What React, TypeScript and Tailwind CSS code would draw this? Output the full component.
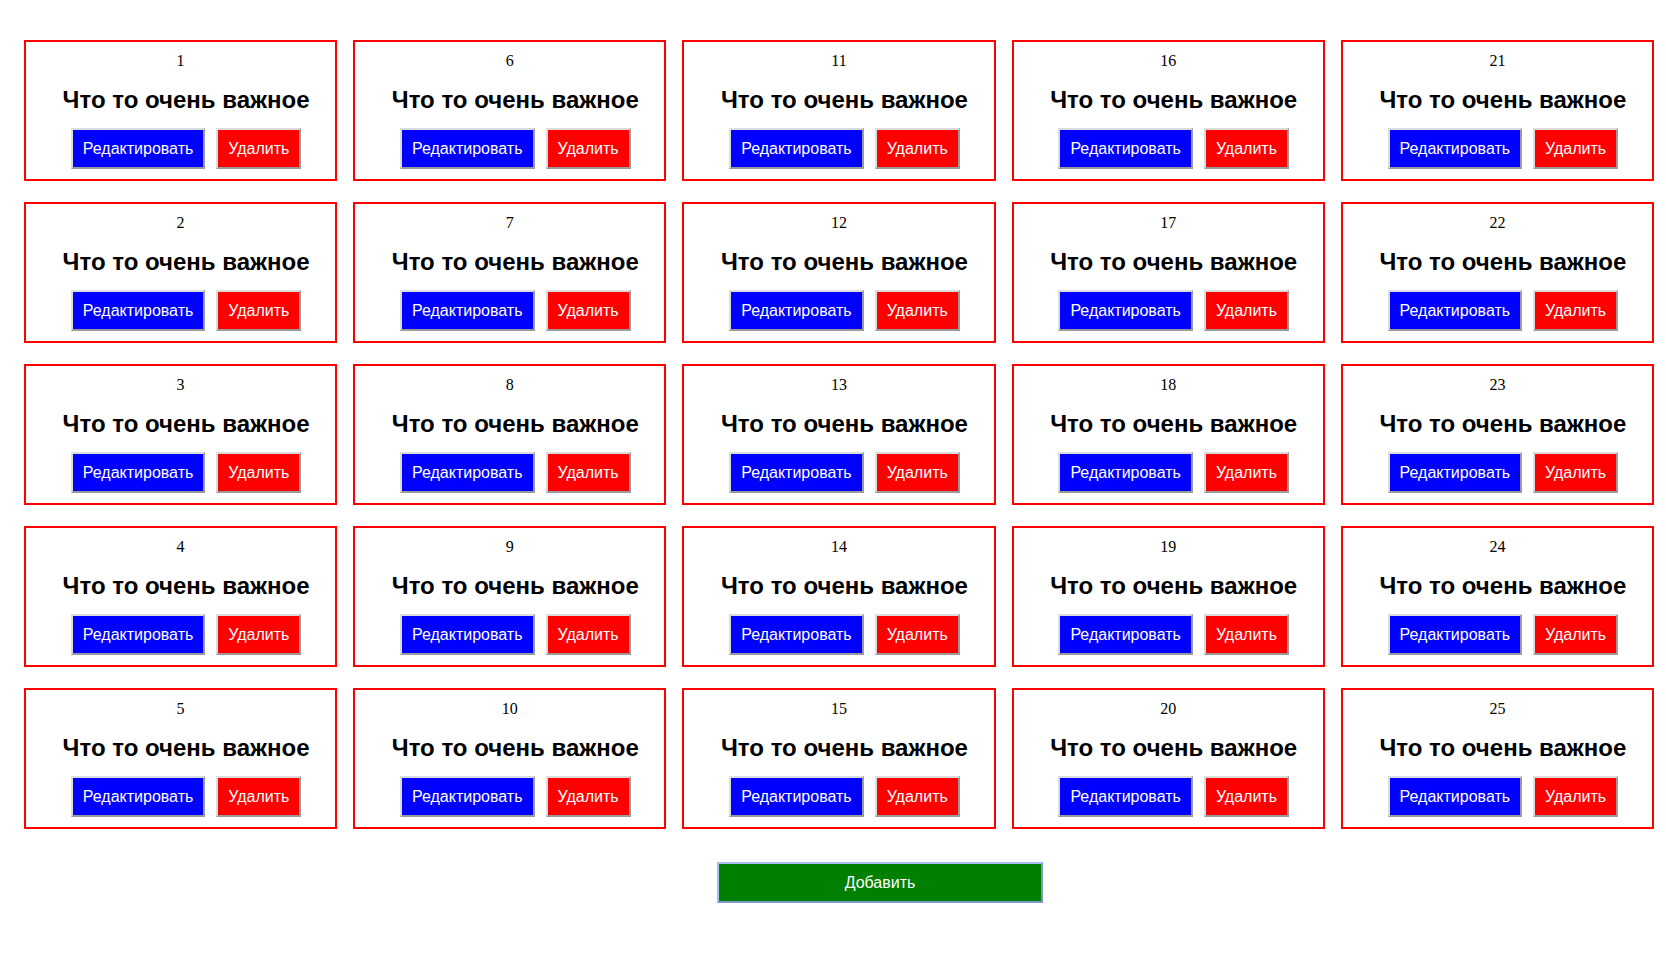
import React from "react";

function Card({ n }: { n: number }) {
  return (
    <div className="border-2 border-solid border-[#ff0000] h-[141px] bg-white flex flex-col items-stretch">
      <div className="pt-[10px] h-[28px] text-center text-[16px] leading-[18px] text-black" style={{ fontFamily: '"Liberation Serif", "Times New Roman", serif' }}>
        {n}
      </div>
      <div className="pl-[11px] mt-[16px] text-center text-[24px] leading-[28px] font-bold text-black" style={{ fontFamily: '"Liberation Sans", Arial, sans-serif' }}>
        Что то очень важное
      </div>
      <div className="pl-[11px] mt-[14px] flex justify-center gap-[11px]" style={{ fontFamily: '"Liberation Sans", Arial, sans-serif' }}>
        <button className="h-[41px] px-[10px] text-[16px] text-white bg-[#0000ff] border-2 border-solid border-t-[#dcdcdc] border-l-[#dcdcdc] border-b-[#9a9a9a] border-r-[#9a9a9a]">
          Редактировать
        </button>
        <button className="h-[41px] px-[10px] text-[16px] text-white bg-[#ff0000] border-2 border-solid border-t-[#dcdcdc] border-l-[#dcdcdc] border-b-[#9a9a9a] border-r-[#9a9a9a]">
          Удалить
        </button>
      </div>
    </div>
  );
}

export default function App() {
  const nums = Array.from({ length: 25 }, (_, i) => i + 1);
  return (
    <div className="w-[1666px] h-[953px] bg-white">
      <div className="pt-[40px] pl-[24px] pr-[12px]">
        <div className="grid grid-cols-5 grid-rows-5 grid-flow-col gap-x-[16px] gap-y-[21px]">
          {nums.map((n) => (
            <Card key={n} n={n} />
          ))}
        </div>
      </div>
      <div className="pl-[717px] mt-[33px]">
        <button
          className="w-[326px] h-[41px] text-[16px] text-white bg-[#008000] border-2 border-solid border-t-[#a6c0f4] border-l-[#a6c0f4] border-b-[#7f95c8] border-r-[#7f95c8]"
          style={{ fontFamily: '"Liberation Sans", Arial, sans-serif' }}
        >
          Добавить
        </button>
      </div>
    </div>
  );
}
